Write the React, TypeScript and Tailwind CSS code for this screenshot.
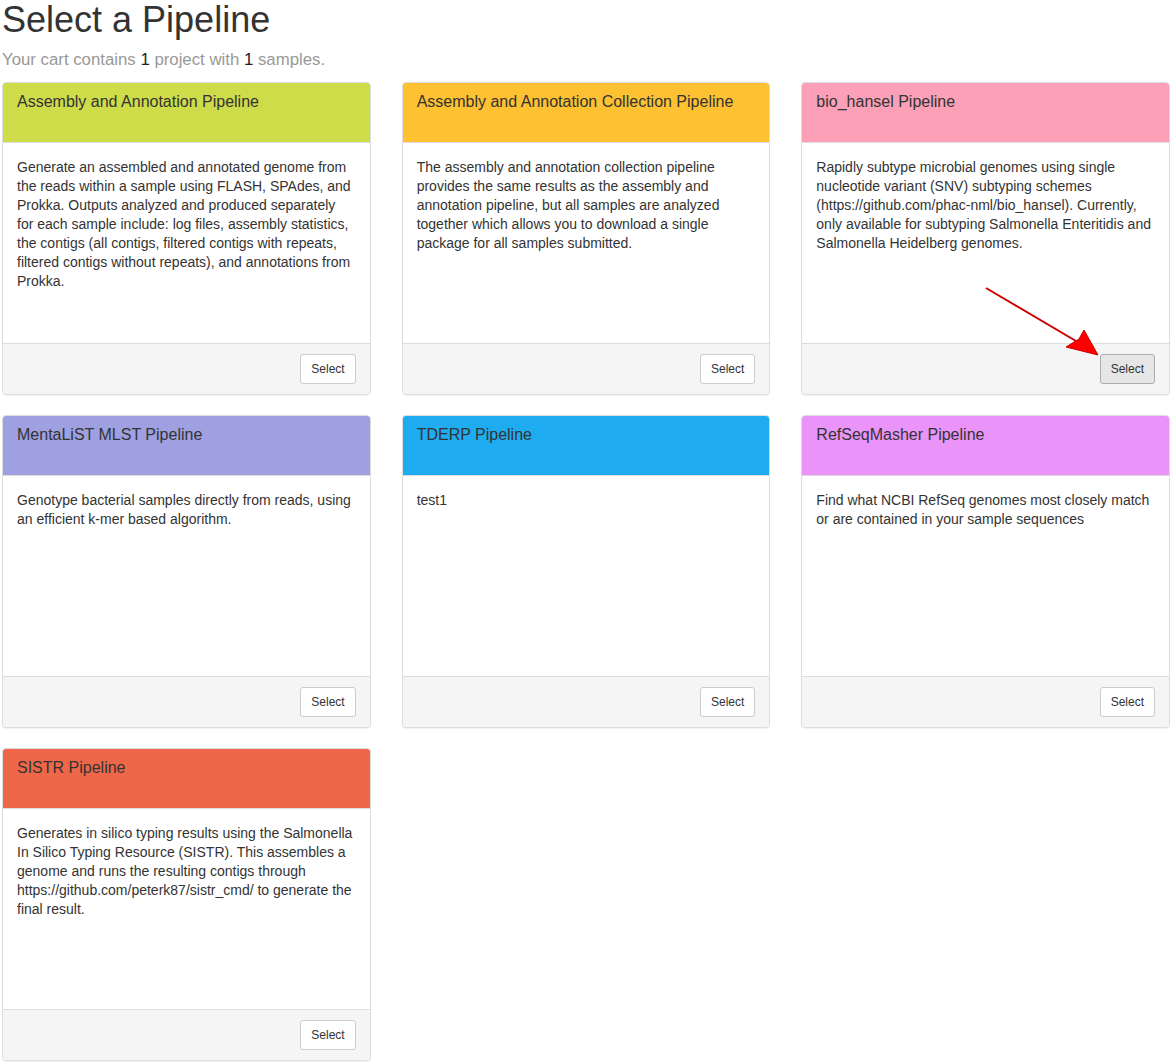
const pipelines = [
  {
    name: "Assembly and Annotation Pipeline",
    color: "bg-[#cfdc4a]",
    description:
      "Generate an assembled and annotated genome from the reads within a sample using FLASH, SPAdes, and Prokka. Outputs analyzed and produced separately for each sample include: log files, assembly statistics, the contigs (all contigs, filtered contigs with repeats, filtered contigs without repeats), and annotations from Prokka.",
  },
  {
    name: "Assembly and Annotation Collection Pipeline",
    color: "bg-[#fdc131]",
    description:
      "The assembly and annotation collection pipeline provides the same results as the assembly and annotation pipeline, but all samples are analyzed together which allows you to download a single package for all samples submitted.",
  },
  {
    name: "bio_hansel Pipeline",
    color: "bg-[#fba0b6]",
    description:
      "Rapidly subtype microbial genomes using single nucleotide variant (SNV) subtyping schemes (https://github.com/phac-nml/bio_hansel). Currently, only available for subtyping Salmonella Enteritidis and Salmonella Heidelberg genomes.",
    active: true,
  },
  {
    name: "MentaLiST MLST Pipeline",
    color: "bg-[#9ea0e1]",
    description: "Genotype bacterial samples directly from reads, using an efficient k-mer based algorithm.",
  },
  {
    name: "TDERP Pipeline",
    color: "bg-[#1fabf0]",
    description: "test1",
  },
  {
    name: "RefSeqMasher Pipeline",
    color: "bg-[#ea94f9]",
    description:
      "Find what NCBI RefSeq genomes most closely match or are contained in your sample sequences",
  },
  {
    name: "SISTR Pipeline",
    color: "bg-[#ef6749]",
    description:
      "Generates in silico typing results using the Salmonella In Silico Typing Resource (SISTR). This assembles a genome and runs the resulting contigs through https://github.com/peterk87/sistr_cmd/ to generate the final result.",
  },
];

type Pipeline = (typeof pipelines)[number];

const PipelineCard = ({ p }: { p: Pipeline }) => (
  <div className="relative rounded-[4px] border border-[#ddd] bg-white shadow-[0_1px_1px_rgba(0,0,0,0.05)]">
    <div className={`${p.color} h-[60px] border-b border-[#ddd] rounded-t-[3px] px-[14px] pt-[10px]`}>
      <h3 className="text-[16px] leading-[1.1] text-[#333]">{p.name}</h3>
    </div>
    <div className="h-[200px] pl-[14px] pr-[17px] pt-[15px] text-[14px] leading-[19px] text-[#333]">
      {p.description}
    </div>
    <div className="flex justify-end border-t border-[#ddd] bg-[#f5f5f5] rounded-b-[3px] px-[14px] py-[10px]">
      <button
        className={
          p.active
            ? "h-[30px] px-[10px] text-[12px] text-[#333] rounded-[3px] border border-[#adadad] bg-[#e6e6e6]"
            : "h-[30px] px-[10px] text-[12px] text-[#333] rounded-[3px] border border-[#ccc] bg-white"
        }
      >
        Select
      </button>
    </div>
    {p.active && (
      <svg className="absolute left-[183px] top-[204px] pointer-events-none" width="120" height="75" viewBox="0 0 120 75">
        <line x1="1" y1="1" x2="96" y2="57" stroke="#cc0000" strokeWidth="2" />
        <polygon points="113,68 81,60 94,52 99,43" fill="#ff0000" stroke="#cc0000" strokeWidth="1" strokeLinejoin="round" />
      </svg>
    )}
  </div>
);

const App = () => (
  <div className="min-h-screen bg-white px-[2px] font-['Liberation_Sans','Helvetica_Neue',Arial,sans-serif] text-[#333]">
    <h1 className="text-[36px] leading-[1.1] text-[#333] mb-[10px]">Select a Pipeline</h1>
    <p className="text-[16.8px] leading-[20px] text-[#999] mb-[12px]">
      Your cart contains <span className="text-[#222]">1</span> project with{" "}
      <span className="text-[#222]">1</span> samples.
    </p>
    <div className="grid grid-cols-3 gap-x-[31px] gap-y-[20px]">
      {pipelines.map((p) => (
        <PipelineCard key={p.name} p={p} />
      ))}
    </div>
  </div>
);

export default App;
